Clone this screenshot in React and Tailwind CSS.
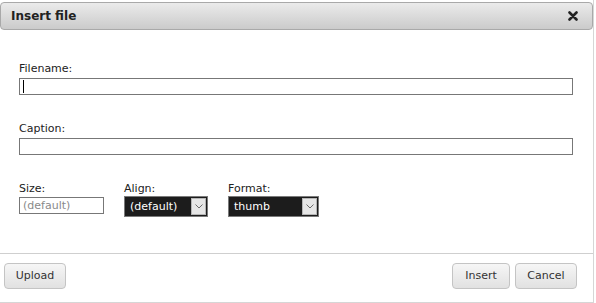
// App.jsx - Insert file dialog
import React from 'react';

const SelectBox = ({ value, width }) => (
  <div className={`flex h-[21px] ${width} items-stretch border border-[#7a7a7a] bg-[#1c1c1c]`}>
    <span className="flex-1 pl-[5px] text-[11px] leading-[19px] text-white">{value}</span>
    <span className="my-[1px] mr-[1px] flex w-[15px] items-center justify-center border border-[#b5b5b5] bg-[#e6e6e6]">
      <svg width="8" height="5" viewBox="0 0 8 5" fill="none">
        <path d="M0.5 0.5 L4 4 L7.5 0.5" stroke="#6b6b6b" strokeWidth="1" />
      </svg>
    </span>
  </div>
);

const Button = ({ children, width }) => (
  <button
    type="button"
    className={`h-[26px] ${width} rounded-[4px] border border-[#c4c4c4] bg-gradient-to-b from-[#f6f6f6] to-[#e1e1e1] text-[11px] text-[#333]`}
  >
    {children}
  </button>
);

export default function App() {
  return (
    <div className="h-[303px] w-[596px] bg-white font-['DejaVu_Sans',Verdana,sans-serif] text-[#222]">
      <div className="flex h-[303px] w-[594px] flex-col border-r border-b border-[#d6d6d6]">
        {/* TITLE BAR */}
        <div className="mt-[2px] flex h-[28px] items-center justify-between rounded-[4px] border border-[#a9a9a9] bg-gradient-to-b from-[#ebebeb] to-[#cbcbcb] pl-[10px] pr-[14px]">
          <span className="text-[12px] font-bold leading-none text-[#222]">Insert file</span>
          <svg width="10" height="10" viewBox="0 0 10 10">
            <path d="M1.5 1.5 L8.5 8.5 M8.5 1.5 L1.5 8.5" stroke="#222" strokeWidth="2.6" strokeLinecap="round" />
          </svg>
        </div>

        {/* BODY */}
        <div className="pl-[19px] pr-[21px] pt-[32px]">
          <label className="block text-[11px] leading-[13px]">Filename:</label>
          <div className="relative mt-[3px]">
            <input
              type="text"
              className="block h-[17px] w-[554px] border border-[#777] bg-white caret-transparent outline-none"
            />
            <span className="absolute left-[4px] top-[2px] h-[13px] w-px bg-black" />
          </div>

          <label className="mt-[27px] block text-[11px] leading-[13px]">Caption:</label>
          <input
            type="text"
            className="mt-[3px] block h-[17px] w-[554px] border border-[#777] bg-white outline-none"
          />

          <div className="mt-[27px] flex items-start gap-[20px]">
            <div className="w-[85px]">
              <label className="block text-[11px] leading-[13px]">Size:</label>
              <input
                type="text"
                placeholder="(default)"
                className="mt-[2px] block h-[17px] w-[85px] border border-[#777] bg-white px-[3px] text-[11px] outline-none placeholder:text-[#8a8a8a]"
              />
            </div>
            <div className="w-[84px]">
              <label className="block text-[11px] leading-[13px]">Align:</label>
              <div className="mt-[1px]">
                <SelectBox value="(default)" width="w-[84px]" />
              </div>
            </div>
            <div className="w-[91px]">
              <label className="block text-[11px] leading-[13px]">Format:</label>
              <div className="mt-[1px]">
                <SelectBox value="thumb" width="w-[91px]" />
              </div>
            </div>
          </div>
        </div>

        {/* FOOTER */}
        <div className="mt-[36px] flex items-start justify-between border-t border-[#cfcfcf] pl-[4px] pr-[16px] pt-[9px]">
          <Button width="w-[62px]">Upload</Button>
          <div className="flex gap-[5px]">
            <Button width="w-[58px]">Insert</Button>
            <Button width="w-[62px]">Cancel</Button>
          </div>
        </div>
      </div>
    </div>
  );
}
